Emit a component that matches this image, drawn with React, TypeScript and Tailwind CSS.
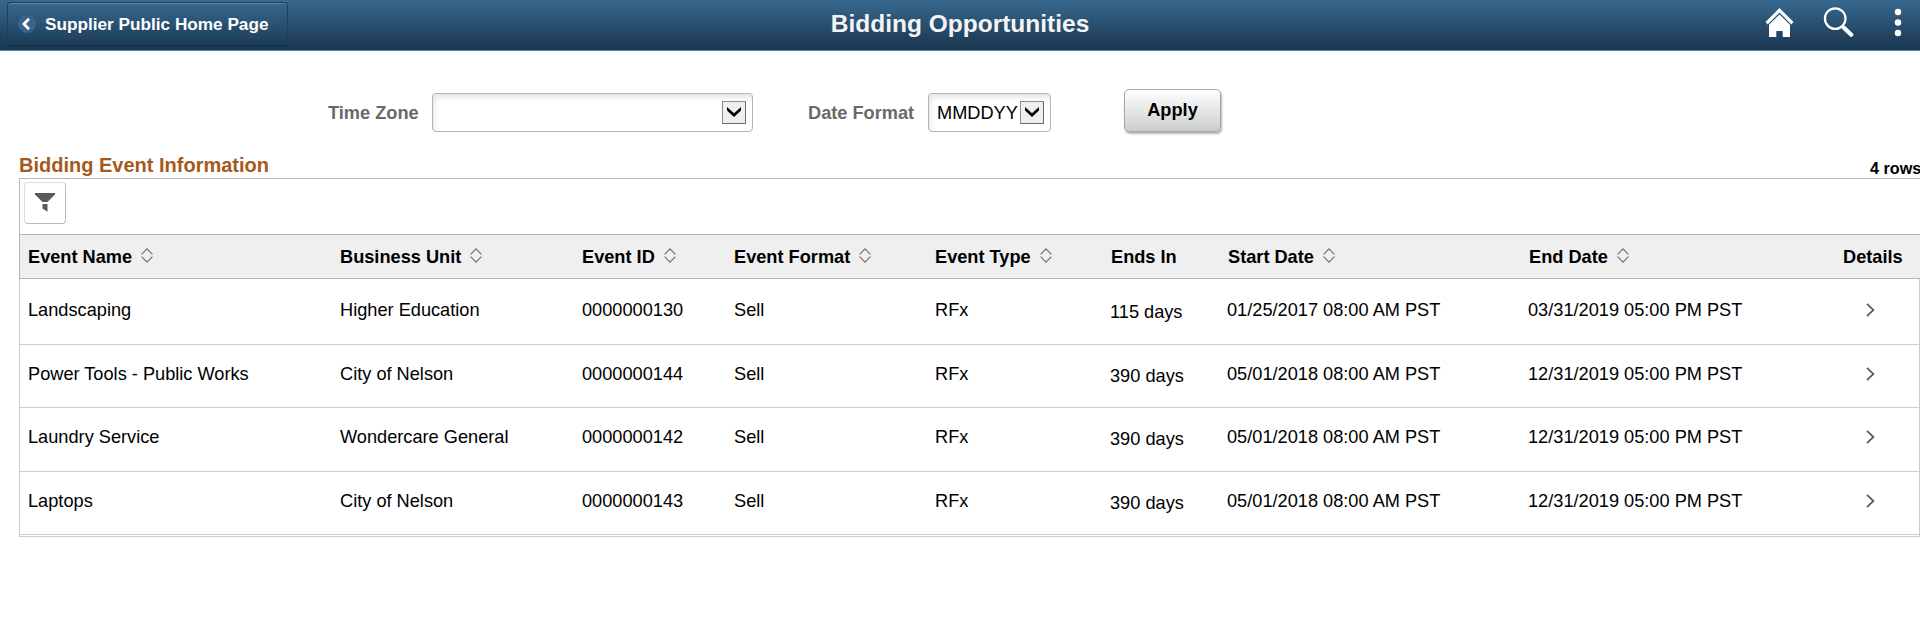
import { useState } from "react";

type BidEvent = {
  name: string;
  unit: string;
  id: string;
  endsIn: string;
  start: string;
  end: string;
  height: string;
};

const columns = [
  { title: "Event Name", sortable: true },
  { title: "Business Unit", sortable: true },
  { title: "Event ID", sortable: true },
  { title: "Event Format", sortable: true },
  { title: "Event Type", sortable: true },
  { title: "Ends In", sortable: false },
  { title: "Start Date", sortable: true },
  { title: "End Date", sortable: true },
  { title: "Details", sortable: false },
];

const events: BidEvent[] = [
  {
    name: "Landscaping",
    unit: "Higher Education",
    id: "0000000130",
    endsIn: "115 days",
    start: "01/25/2017 08:00 AM PST",
    end: "03/31/2019 05:00 PM PST",
    height: "h-[66px] pt-[21px]",
  },
  {
    name: "Power Tools - Public Works",
    unit: "City of Nelson",
    id: "0000000144",
    endsIn: "390 days",
    start: "05/01/2018 08:00 AM PST",
    end: "12/31/2019 05:00 PM PST",
    height: "h-[63px] pt-[19px]",
  },
  {
    name: "Laundry Service",
    unit: "Wondercare General",
    id: "0000000142",
    endsIn: "390 days",
    start: "05/01/2018 08:00 AM PST",
    end: "12/31/2019 05:00 PM PST",
    height: "h-16 pt-[19px]",
  },
  {
    name: "Laptops",
    unit: "City of Nelson",
    id: "0000000143",
    endsIn: "390 days",
    start: "05/01/2018 08:00 AM PST",
    end: "12/31/2019 05:00 PM PST",
    height: "h-[63px] pt-[19px]",
  },
];

const gridCols =
  "grid grid-cols-[312px_242px_152px_201px_176px_117px_301px_314px_1fr] pl-2 whitespace-nowrap";

const SortIcon = () => (
  <svg className="ml-[9px] -mt-[3px] w-3 h-[15px]" viewBox="0 0 12 15" fill="none" stroke="#707070" strokeWidth="1.2">
    <path d="M0.6 6.3 L6 0.9 L11.4 6.3" />
    <path d="M0.6 8.7 L6 14.1 L11.4 8.7" />
  </svg>
);

const DropArrow = () => (
  <span className="flex items-center justify-center w-6 h-[23px] bg-[#efefef] border border-[#8c8c8c] border-r-[#6a6a6a] border-b-[#6a6a6a]">
    <svg className="w-[14px] h-[10px] -mt-px" viewBox="0 0 14 10">
      <path d="M0 0 V3.4 L7 10 L14 3.4 V0 L7 6.3 Z" fill="#000" />
    </svg>
  </span>
);

const Header = () => (
  <header className="flex justify-between h-[51px] border-b border-[#5288b8] bg-linear-to-b from-[#386990] to-[#19364f] text-white">
    <div className="w-[640px] pl-[7px] pt-0.5">
      <button className="flex items-center w-[281px] h-11 pl-[10px] rounded-[4px] border border-[#1c3f5d] border-b-[#142c41] bg-linear-to-b from-[#37678e] to-[#1d3d58] shadow-[inset_0_1px_0_#5c88ad]">
        <span className="flex items-center justify-center w-[18px] h-[18px] pr-0.5 rounded-full bg-[#37658b]">
          <svg className="w-2 h-3" viewBox="0 0 8 12" fill="none" stroke="#fff" strokeWidth="2.8">
            <path d="M7 0.8 L2 6 L7 11.2" />
          </svg>
        </span>
        <span className="ml-[9px] text-[17.2px] leading-5 font-bold whitespace-nowrap">
          Supplier Public Home Page
        </span>
      </button>
    </div>

    <h1 className="pt-[9px] text-[24.5px] leading-[30px] font-bold text-[#f4f4f4]">
      Bidding Opportunities
    </h1>

    <div className="flex justify-end w-[640px] pr-[18px] pt-[7px]">
      <svg className="w-[30px] h-[31px]" viewBox="0 0 30 31" fill="#fff">
        <path d="M15.5 1 L29.5 15 L27.3 17.4 L15.5 5.6 L3.7 17.4 L1.5 15 Z" />
        <path d="M15.5 7.6 L26 17.8 V30 H18.7 V24 H12.3 V30 H5 V17.8 Z" />
      </svg>
      <svg className="ml-[29px] w-[31px] h-[31px]" viewBox="0 0 31 31" fill="none" stroke="#fff">
        <circle cx="12.2" cy="11.6" r="10.3" strokeWidth="2.2" />
        <path d="M19.2 19 L21.4 21.2" strokeWidth="2.8" />
        <path d="M21.2 21 L28.2 27.8" strokeWidth="4.2" strokeLinecap="round" />
      </svg>
      <svg className="ml-[40px] w-2 h-[30px]" viewBox="0 0 8 30" fill="#fff">
        <circle cx="4" cy="5" r="3.2" />
        <circle cx="4" cy="15.5" r="3.2" />
        <circle cx="4" cy="26" r="3.2" />
      </svg>
    </div>
  </header>
);

const Filters = () => (
  <div className="flex h-[94px] pl-[328px] text-[18.2px] leading-5">
    <div className="w-[104px] pt-[52px] font-bold text-[#696969]">Time Zone</div>
    <div className="flex justify-end w-[321px] h-[39px] mt-[42px] pr-1.5 pt-[7px] rounded-[4px] border border-[#b4b4b4] shadow-[inset_3px_5px_5px_-1px_#e8e8e8]">
      <DropArrow />
    </div>

    <div className="w-[120px] ml-[55px] pt-[52px] font-bold text-[#696969]">Date Format</div>
    <div className="flex justify-between w-[123px] h-[39px] mt-[42px] pl-2 pr-1.5 pt-[7px] rounded-[4px] border border-[#b4b4b4] shadow-[inset_3px_5px_5px_-1px_#e8e8e8]">
      <span className="pt-0.5 text-black">MMDDYY</span>
      <DropArrow />
    </div>

    <button className="w-[97px] h-[43px] ml-[73px] mt-[38px] pb-0.5 rounded-[5px] border border-[#a6a6a6] bg-linear-to-b from-white to-[#cccece] shadow-[1px_2px_2px_#b4b4b4] font-bold text-black">
      Apply
    </button>
  </div>
);

const App = () => {
  const [sortBy, setSortBy] = useState("");

  return (
    <div className="w-full h-[617px] overflow-hidden bg-white text-black font-['Liberation_Sans',Arial,sans-serif]">
      <Header />
      <Filters />

      <main className="pl-[19px]">
        <div className="flex justify-between h-[33px] whitespace-nowrap">
          <h2 className="pt-2 text-[20px] leading-6 font-bold text-[#a55a1c]">
            Bidding Event Information
          </h2>
          <span className="w-[50px] pt-[13px] text-[16.2px] leading-5 font-bold">4 rows</span>
        </div>

        <div className="h-[56px] pl-1 pt-[3px] border-t border-l border-[#b9b9b9]">
          <button className="flex items-center justify-center w-[42px] h-[42px] rounded-[4px] border border-[#dedede] border-r-[#b9b9b9] border-b-[#b9b9b9]">
            <svg className="w-5 h-[19px] -mt-0.5" viewBox="0 0 20 19" fill="#5a5a5a">
              <path d="M0 0 H20 V1.5 L12.5 9 H7.5 L0 1.5 Z" />
              <path d="M7.5 11 H12.5 V18.8 L7.5 15.5 Z" />
            </svg>
          </button>
        </div>

        <div className={`${gridCols} h-[45px] border-y border-l border-[#b4b4b4] bg-[#efefef]`}>
          {columns.map((col) => (
            <button
              key={col.title}
              aria-pressed={sortBy === col.title}
              onClick={() => col.sortable && setSortBy(col.title)}
              className="flex items-center text-[18.2px] leading-5 font-bold"
            >
              {col.title}
              {col.sortable && <SortIcon />}
            </button>
          ))}
        </div>

        <div className="border-x border-b border-[#cccccc] pb-px">
          {events.map((event) => (
            <div
              key={event.id}
              className={`${gridCols} ${event.height} border-b border-[#cccccc] text-[18.2px] leading-5`}
            >
              <div>{event.name}</div>
              <div>{event.unit}</div>
              <div>{event.id}</div>
              <div>Sell</div>
              <div>RFx</div>
              <div className="-ml-px pt-0.5">{event.endsIn}</div>
              <div className="-ml-px">{event.start}</div>
              <div className="-ml-px">{event.end}</div>
              <div className="pl-[23px] pt-[3px]">
                <svg className="w-[9px] h-[14px]" viewBox="0 0 9 14" fill="none" stroke="#5f5f5f" strokeWidth="1.8">
                  <path d="M1 0.8 L7.4 7 L1 13.2" />
                </svg>
              </div>
            </div>
          ))}
        </div>
      </main>
    </div>
  );
};

export default App;
